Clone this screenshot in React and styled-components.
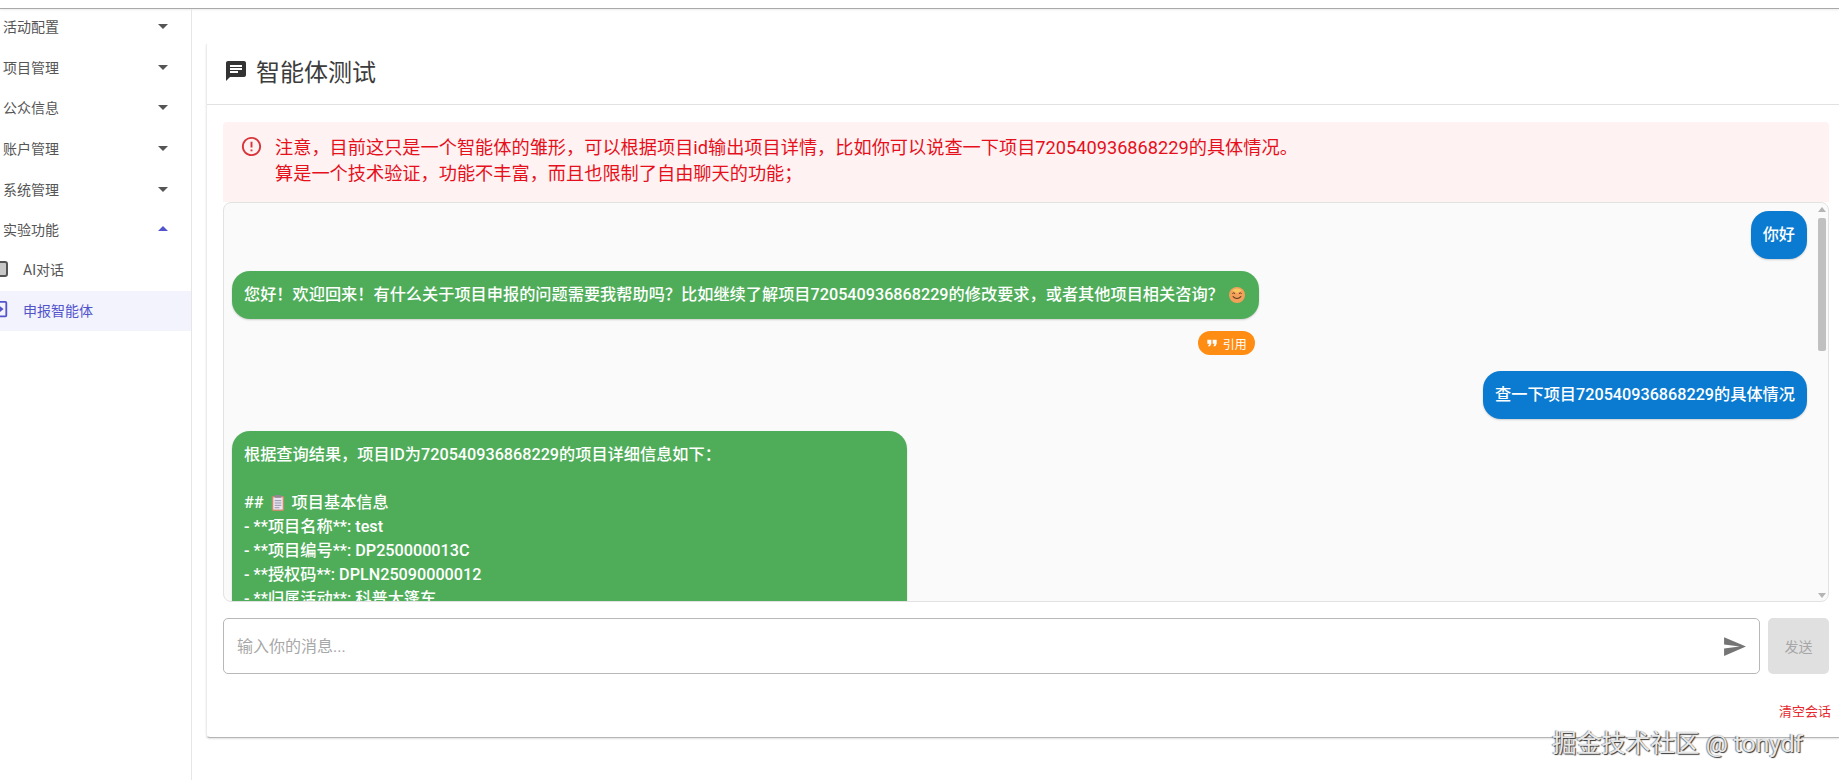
import React from 'react';
import styled, { createGlobalStyle } from 'styled-components';
import {
  MdArrowDropDown,
  MdArrowDropUp,
  MdChat,
  MdErrorOutline,
  MdFormatQuote,
  MdSend,
} from 'react-icons/md';

const menu = ['活动配置', '项目管理', '公众信息', '账户管理', '系统管理'];
const projectLines = [
  '- **项目名称**: test',
  '- **项目编号**: DP250000013C',
  '- **授权码**: DPLN25090000012',
  '- **归属活动**: 科普大篷车',
];

const SmileEmoji = () => (
  <EmojiIcon viewBox="0 0 16 16" $gap="5px">
    <circle cx="8" cy="8" r="8" fill="#f2a05a" />
    <path d="M3 3.5a7 7 0 0 1 10 0L8 6z" fill="#f7c860" />
    <path d="M3.4 6.6q1.3-1.5 2.6 0M10 6.6q1.3-1.5 2.6 0" fill="none" stroke="#5c3a1e" strokeWidth="1" />
    <path d="M3.8 9.4q4.2 4.2 8.4 0" fill="none" stroke="#5c3a1e" strokeWidth="1.1" />
  </EmojiIcon>
);

const ClipboardEmoji = () => (
  <EmojiIcon viewBox="0 0 14 17" $gap="2px">
    <rect x="0.5" y="1" width="13" height="16" rx="1.5" fill="#c98b6b" />
    <rect x="2" y="2.5" width="10" height="13" fill="#e9e4ee" />
    <rect x="3.5" y="0" width="7" height="3" rx="1" fill="#8d8a96" />
    <path d="M3.5 6h7M3.5 8.5h7M3.5 11h7M3.5 13.5h5" stroke="#8f8fa8" strokeWidth="1" />
  </EmojiIcon>
);

const App = () => {
  return (
    <>
      <GlobalStyle />
      <Page>
        <TopBar />
        <Body>
          <Sidebar>
            {menu.map((label) => (
              <MenuRow key={label}>
                <span>{label}</span>
                <MdArrowDropDown size={24} />
              </MenuRow>
            ))}
            <MenuRow $open>
              <span>实验功能</span>
              <MdArrowDropUp size={24} />
            </MenuRow>
            <SubRow>
              <SubIcon viewBox="0 0 16 18">
                <rect x="1" y="2" width="14" height="14" rx="2" fill="#c8c8c8" stroke="#555" strokeWidth="2" />
              </SubIcon>
              <span>AI对话</span>
            </SubRow>
            <SubRow $active>
              <SubIcon viewBox="0 0 16 20">
                <path d="M2 1h12a1 1 0 0 1 1 1v14a1 1 0 0 1-1 1H6l-3 2v-2H2z" fill="none" stroke="#5254cc" strokeWidth="2" />
                <path d="M7 5l5 4-5 4z" fill="#5254cc" />
              </SubIcon>
              <span>申报智能体</span>
            </SubRow>
          </Sidebar>

          <Card>
            <CardHeader>
              <MdChat size={24} />
              <Title>智能体测试</Title>
            </CardHeader>

            <CardBody>
              <Alert>
                <AlertIcon>
                  <MdErrorOutline size={23} />
                </AlertIcon>
                <AlertText>
                  <div>注意，目前这只是一个智能体的雏形，可以根据项目id输出项目详情，比如你可以说查一下项目720540936868229的具体情况。</div>
                  <div>算是一个技术验证，功能不丰富，而且也限制了自由聊天的功能；</div>
                </AlertText>
              </Alert>

              <ChatFrame>
                <ChatBox>
                  <UserBubble>你好</UserBubble>
                  <BotMessage>
                    <BotBubble>
                      您好！欢迎回来！有什么关于项目申报的问题需要我帮助吗？比如继续了解项目720540936868229的修改要求，或者其他项目相关咨询？
                      <SmileEmoji />
                    </BotBubble>
                    <QuoteButton>
                      <MdFormatQuote size={16} />
                      引用
                    </QuoteButton>
                  </BotMessage>
                  <UserBubble>查一下项目720540936868229的具体情况</UserBubble>
                  <BotBubble $long>
                    <div>根据查询结果，项目ID为720540936868229的项目详细信息如下：</div>
                    <BlankLine />
                    <div>
                      ## <ClipboardEmoji /> 项目基本信息
                    </div>
                    {projectLines.map((line) => (
                      <div key={line}>{line}</div>
                    ))}
                  </BotBubble>
                </ChatBox>
                <ScrollRail>
                  <ScrollArrow />
                  <ScrollThumb />
                  <ScrollArrow $down />
                </ScrollRail>
              </ChatFrame>

              <InputRow>
                <InputBox>
                  <MessageInput placeholder="输入你的消息..." />
                  <MdSend size={25} />
                </InputBox>
                <SendButton disabled>发送</SendButton>
              </InputRow>

              <ClearRow>
                <ClearLink>清空会话</ClearLink>
              </ClearRow>
            </CardBody>
          </Card>
        </Body>
        <Watermark>掘金技术社区 @ tonydf</Watermark>
      </Page>
    </>
  );
};

const GlobalStyle = createGlobalStyle`
  html, body {
    margin: 0;
    height: 100%;
    overflow: hidden;
    background: #fff;
    font-family: Roboto, "Noto Sans CJK SC", sans-serif;
  }
`;

const Page = styled.div`
  position: relative;
  display: flex;
  flex-direction: column;
  height: 780px;
  overflow: hidden;
`;

const TopBar = styled.div`
  flex: none;
  height: 8px;
  border-bottom: 1px solid #a9a9a9;
  box-shadow: 0 1px 2px rgba(0, 0, 0, 0.08);
`;

const Body = styled.div`
  flex: 1;
  display: flex;
  min-height: 0;
`;

const Sidebar = styled.aside`
  flex: none;
  width: 191px;
  border-right: 1px solid #e6e6e6;
`;

const MenuRow = styled.div`
  display: flex;
  align-items: center;
  justify-content: space-between;
  height: 40.6px;
  padding: 0 16px 0 3px;
  font-size: 14px;
  color: #555;

  &:first-child {
    margin-top: -3px;
  }

  svg {
    color: ${(p) => (p.$open ? '#5254cc' : '#555')};
  }
`;

const SubRow = styled.div`
  display: flex;
  align-items: center;
  gap: 15px;
  box-sizing: border-box;
  height: ${(p) => (p.$active ? '40px' : '39.6px')};
  margin: ${(p) => (p.$active ? '2px' : '0')} 0 0 -8px;
  padding-bottom: ${(p) => (p.$active ? '2px' : '0')};
  font-size: 14px;
  color: ${(p) => (p.$active ? '#5254cc' : '#555')};
  background: ${(p) => (p.$active ? '#f3f3fe' : 'transparent')};
`;

const SubIcon = styled.svg`
  flex: none;
  width: 16px;
  height: 18px;
`;

const Card = styled.section`
  flex: 1;
  min-width: 0;
  align-self: flex-start;
  height: 693px;
  margin: 35px 0 0 14px;
  border-left: 1px solid #ececec;
  border-bottom: 1px solid #b5b5b5;
  border-radius: 0 0 0 4px;
  box-shadow: 0 1px 2px rgba(0, 0, 0, 0.12);
  background: #fff;
`;

const CardHeader = styled.header`
  display: flex;
  align-items: center;
  gap: 8px;
  height: 53px;
  padding: 0 0 7px 17px;
  border-bottom: 1px solid #e2e2e2;
  color: #333;
`;

const Title = styled.h2`
  margin: 0;
  font-size: 24px;
  font-weight: 400;
  color: #3c3c3c;
`;

const CardBody = styled.div`
  padding: 17px 10px 0 16px;
`;

const Alert = styled.div`
  display: flex;
  height: 80px;
  box-sizing: border-box;
  padding: 13px 16px 0 17px;
  background: #fff2f2;
  border-radius: 4px 4px 0 0;
  color: #e5101c;
`;

const AlertIcon = styled.div`
  flex: none;
  width: 35px;
  color: #d8343a;
`;

const AlertText = styled.div`
  font-size: 18.2px;
  line-height: 26px;
`;

const ChatFrame = styled.div`
  position: relative;
`;

const ChatBox = styled.div`
  display: flex;
  flex-direction: column;
  align-items: flex-start;
  box-sizing: border-box;
  height: 400px;
  padding: 8px 21px 8px 8px;
  background: #fafafa;
  border: 1px solid #e2e2e2;
  border-radius: 8px;
  overflow: hidden;
`;

const ScrollRail = styled.div`
  position: absolute;
  top: 0;
  bottom: 0;
  right: 3px;
  width: 8px;
  display: flex;
  flex-direction: column;
  align-items: center;
`;

const ScrollArrow = styled.div`
  flex: none;
  width: 0;
  height: 0;
  margin: ${(p) => (p.$down ? 'auto 0 4px' : '5px 0 0')};
  border-left: 4px solid transparent;
  border-right: 4px solid transparent;
  border-${(p) => (p.$down ? 'top' : 'bottom')}: 5px solid #b4b4b4;
`;

const ScrollThumb = styled.div`
  flex: none;
  width: 8px;
  height: 133px;
  margin-top: 6px;
  border-radius: 2px;
  background: #c0c0c0;
`;

const Bubble = styled.div`
  flex: none;
  box-sizing: border-box;
  padding: 12px;
  border-radius: 18px;
  font-size: 16.2px;
  font-weight: 500;
  line-height: 24px;
  color: #fff;
  box-shadow: 0 1px 2px rgba(0, 0, 0, 0.18);
`;

const UserBubble = styled(Bubble)`
  align-self: flex-end;
  margin-bottom: 12px;
  background: #0a7bd0;
`;

const BotMessage = styled.div`
  flex: none;
  display: flex;
  flex-direction: column;
  margin-bottom: 16px;
`;

const BotBubble = styled(Bubble)`
  background: #4fad5a;
  width: ${(p) => (p.$long ? '675px' : 'auto')};
  min-height: ${(p) => (p.$long ? '300px' : '0')};
`;

const BlankLine = styled.div`
  height: 24px;
`;

const EmojiIcon = styled.svg`
  width: 16px;
  height: 16px;
  margin: 0 2px 0 ${(p) => p.$gap};
  vertical-align: -3px;
`;

const QuoteButton = styled.div`
  align-self: flex-end;
  display: flex;
  align-items: center;
  gap: 3px;
  height: 24px;
  margin: 12px 4px 0 0;
  padding: 0 8px 0 6px;
  border-radius: 12px;
  background: #ff8d14;
  color: #fff;
  font-size: 12px;
`;

const InputRow = styled.div`
  display: flex;
  gap: 8px;
  margin-top: 16px;
`;

const InputBox = styled.div`
  flex: 1;
  display: flex;
  align-items: center;
  height: 56px;
  box-sizing: border-box;
  padding: 0 12px 0 13px;
  border: 1px solid #b8b8b8;
  border-radius: 5px;

  svg {
    flex: none;
    color: #757575;
  }
`;

const MessageInput = styled.input`
  flex: 1;
  border: 0;
  outline: 0;
  padding: 0;
  background: transparent;
  font: inherit;
  font-size: 16px;

  &::placeholder {
    color: #a8a8a8;
    opacity: 1;
  }
`;

const SendButton = styled.button`
  flex: none;
  width: 61px;
  height: 56px;
  padding: 0;
  border: 0;
  border-radius: 5px;
  background: #e0e0e0;
  color: #a6a6a6;
  font-family: inherit;
  font-size: 14px;
`;

const ClearRow = styled.div`
  display: flex;
  justify-content: flex-end;
  margin: 28px -2px 0 0;
`;

const ClearLink = styled.span`
  font-size: 13px;
  line-height: 20px;
  color: #e5262c;
`;

const Watermark = styled.div`
  position: absolute;
  left: 1552px;
  top: 729px;
  font-size: 24.6px;
  line-height: 30px;
  white-space: nowrap;
  color: #e8e8e8;
  text-shadow: 1px 1px 1px #333, -1px 0 1px rgba(60, 60, 60, 0.6);
`;

export default App;
